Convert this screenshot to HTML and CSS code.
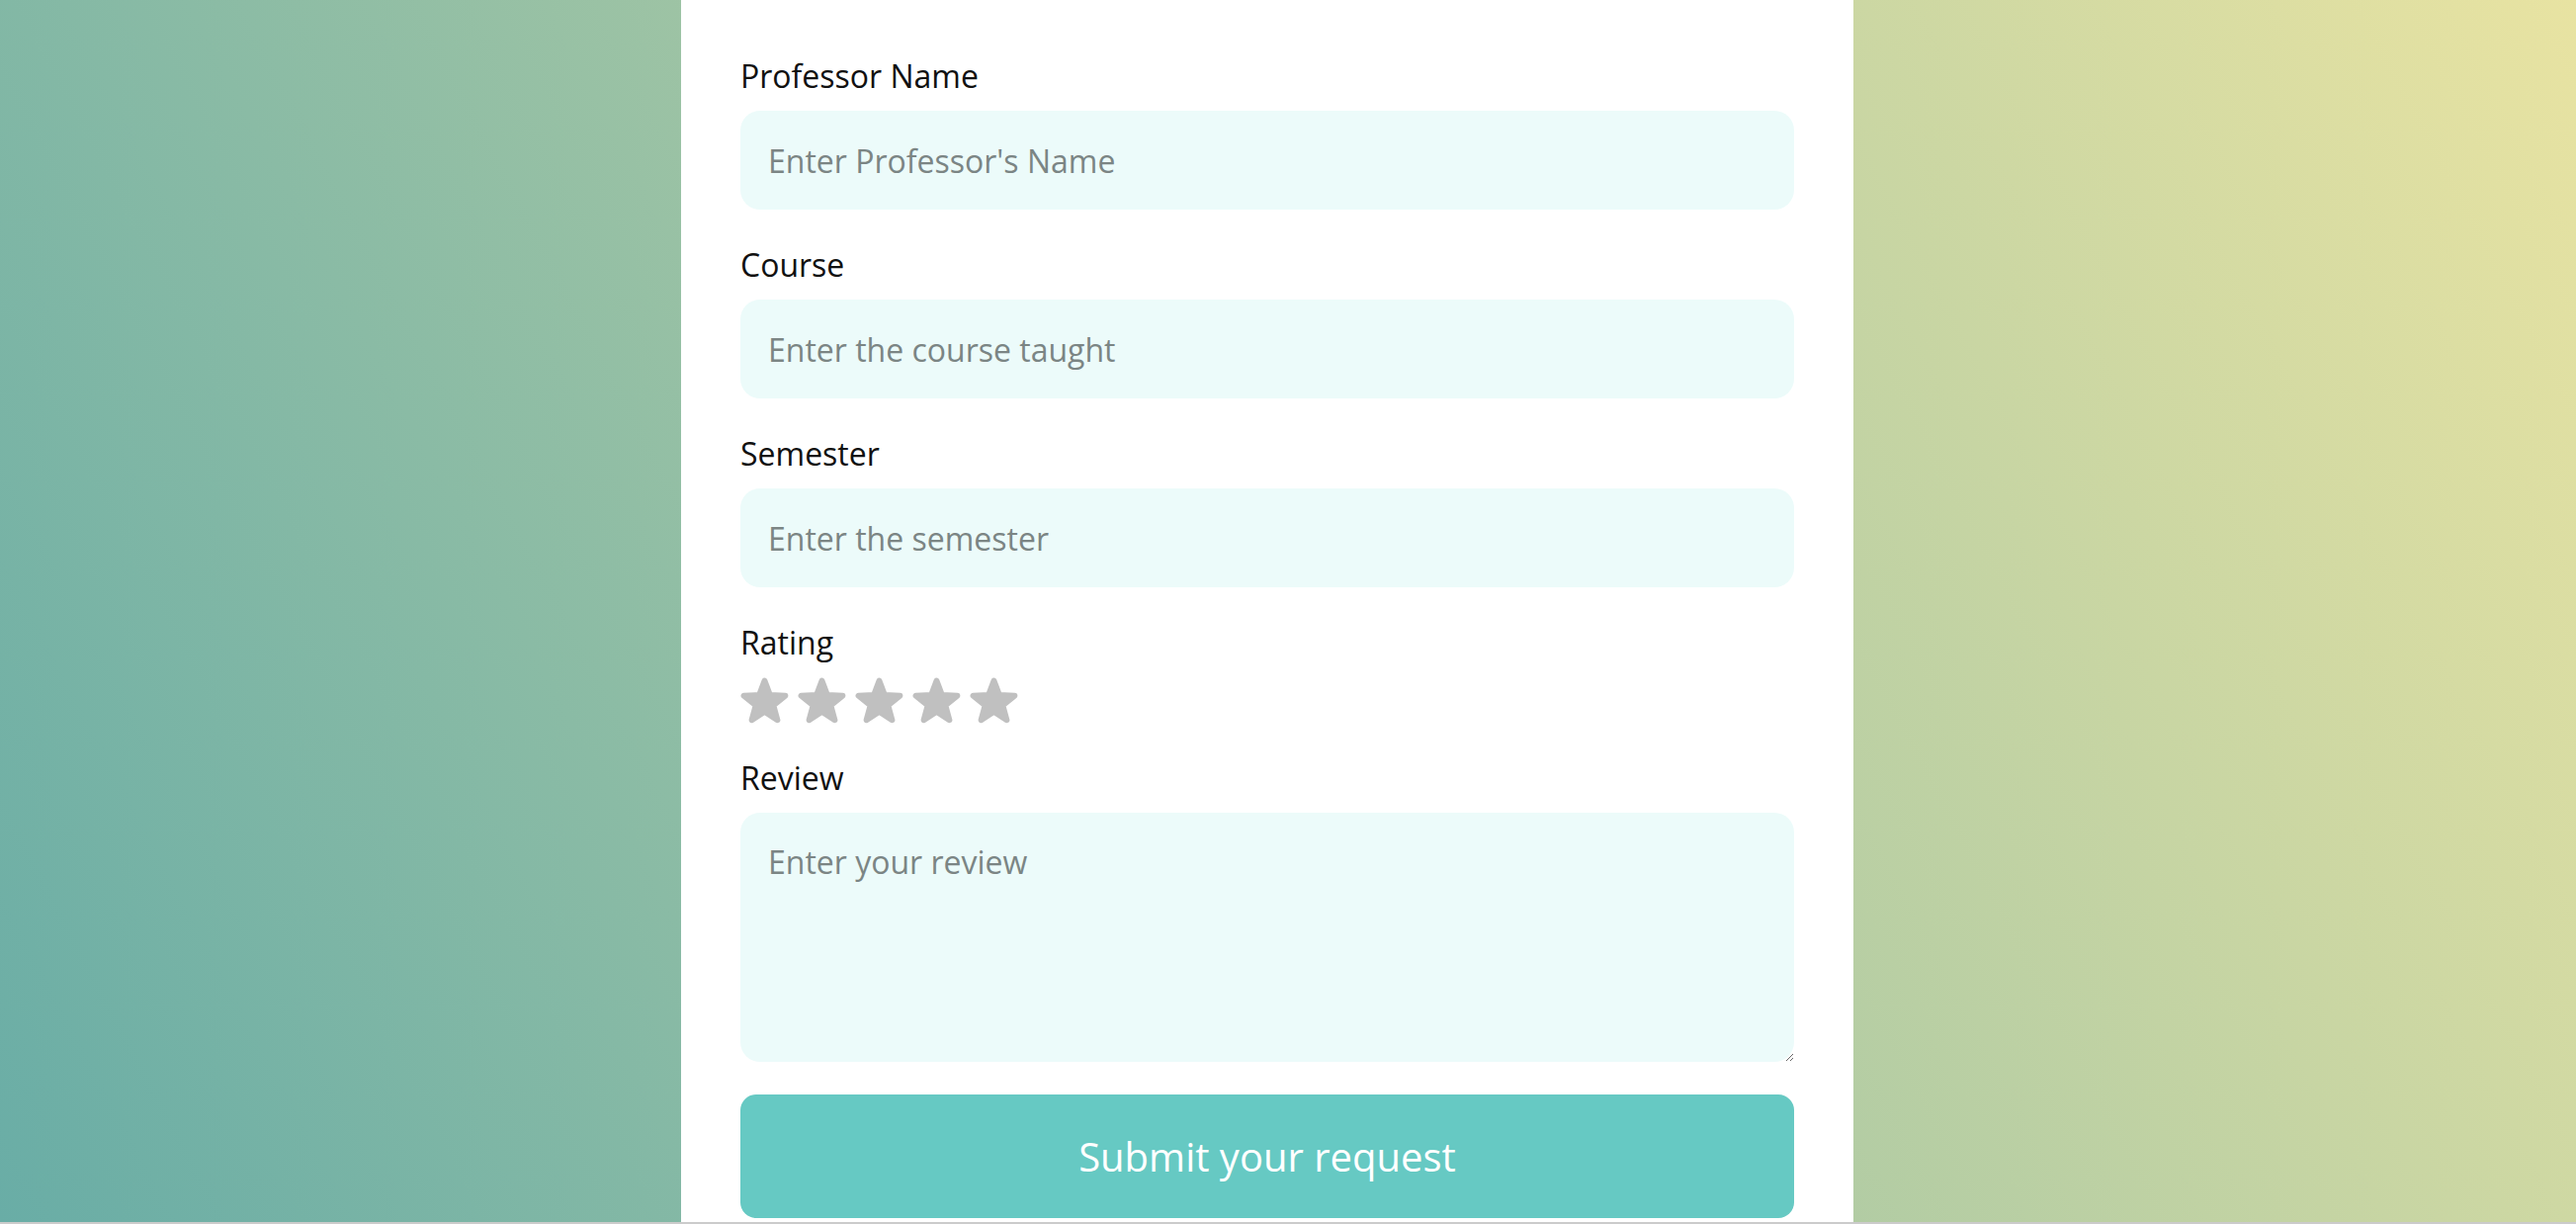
FILE: index.html
```html
<!DOCTYPE html>
<html lang="en">
<head>
  <meta charset="UTF-8">
  <meta name="viewport" content="width=device-width, initial-scale=1.0">
  <title>Rate a Professor</title>
  <link rel="stylesheet" href="styles.css">
</head>
<body>
<div class="page">
  <form class="card">
    <label for="prof">Professor Name</label>
    <input type="text" id="prof" placeholder="Enter Professor's Name">

    <label for="course">Course</label>
    <input type="text" id="course" placeholder="Enter the course taught">

    <label for="semester">Semester</label>
    <input type="text" id="semester" placeholder="Enter the semester">

    <label>Rating</label>
    <div class="stars">
      <svg class="star" viewBox="0 0 50 48" width="49" height="47"><polygon points="25,3.5 30.58,18.31 46.4,19.05 34.04,28.94 38.23,44.2 25,35.5 11.77,44.2 15.96,28.94 3.6,19.05 19.42,18.31"/></svg>
      <svg class="star" viewBox="0 0 50 48" width="49" height="47"><polygon points="25,3.5 30.58,18.31 46.4,19.05 34.04,28.94 38.23,44.2 25,35.5 11.77,44.2 15.96,28.94 3.6,19.05 19.42,18.31"/></svg>
      <svg class="star" viewBox="0 0 50 48" width="49" height="47"><polygon points="25,3.5 30.58,18.31 46.4,19.05 34.04,28.94 38.23,44.2 25,35.5 11.77,44.2 15.96,28.94 3.6,19.05 19.42,18.31"/></svg>
      <svg class="star" viewBox="0 0 50 48" width="49" height="47"><polygon points="25,3.5 30.58,18.31 46.4,19.05 34.04,28.94 38.23,44.2 25,35.5 11.77,44.2 15.96,28.94 3.6,19.05 19.42,18.31"/></svg>
      <svg class="star" viewBox="0 0 50 48" width="49" height="47"><polygon points="25,3.5 30.58,18.31 46.4,19.05 34.04,28.94 38.23,44.2 25,35.5 11.77,44.2 15.96,28.94 3.6,19.05 19.42,18.31"/></svg>
    </div>

    <label for="review">Review</label>
    <textarea id="review" placeholder="Enter your review"></textarea>

    <button type="button" class="submit">Submit your request</button>
  </form>
</div>
</body>
</html>
```

FILE: styles.css
```css
body {
  margin: 0;
  background: #cbcbcb;
  font-family: "Open Sans", "Liberation Sans", sans-serif;
}
.page {
  height: calc(100vh - 2px);
  overflow: hidden;
  display: flex;
  justify-content: center;
  padding-right: 42px;
  background: linear-gradient(62deg, #69ada6, #e8e3a2);
}
.card {
  width: 1186px;
  box-sizing: border-box;
  flex-shrink: 0;
  background: #ffffff;
  padding: 53px 60px 40px;
}
label {
  display: block;
  font-size: 32px;
  line-height: 48px;
  color: #111;
  margin-bottom: 11px;
}
input, textarea {
  display: block;
  width: 100%;
  box-sizing: border-box;
  border: none;
  outline: none;
  border-radius: 20px;
  background: #ecfbfa;
  font-family: inherit;
  font-size: 32px;
  color: #333;
  padding: 28px 28px;
  margin: 0 0 32px;
}
input {
  height: 100px;
}
textarea {
  height: 252px;
  resize: vertical;
  margin-bottom: 33px;
}
input::placeholder, textarea::placeholder {
  color: #7b8584;
}
.stars {
  display: flex;
  gap: 9px;
  margin: 11px 0 31px;
}
.star {
  display: block;
  fill: #c0c0c0;
  stroke: #c0c0c0;
  stroke-width: 6;
  stroke-linejoin: round;
}
.submit {
  display: block;
  width: 100%;
  border: none;
  border-radius: 16px;
  background: #66c9c3;
  color: #ffffff;
  font-family: inherit;
  font-size: 40px;
  padding: 35px 0;
  cursor: pointer;
}
```
